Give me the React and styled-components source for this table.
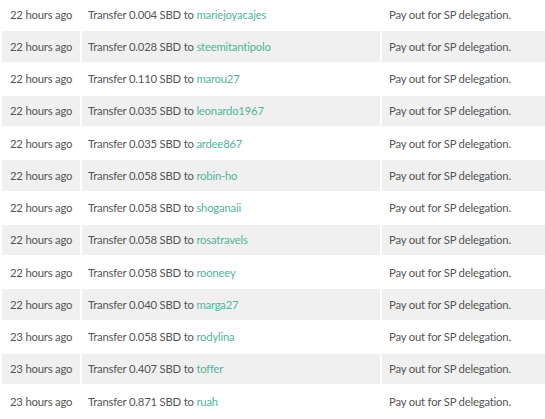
import styled, { createGlobalStyle } from 'styled-components'

const GlobalStyle = createGlobalStyle`
  body {
    margin: 0;
    background: #ffffff;
    overflow: hidden;
    font-family: Lato, "Noto Sans", sans-serif;
  }
`

const Table = styled.table`
  width: 620px;
  margin-top: -3px;
  border-collapse: separate;
  border-spacing: 2px;
  table-layout: fixed;

  font-size: 11.3px;
  letter-spacing: -0.2px;
  color: #555555;
`

const Row = styled.tr`
  background: ${(p) => (p.$striped ? '#f0f0f0' : '#ffffff')};
`

const Cell = styled.td`
  height: 30.25px;
  padding: 0 0 0 ${(p) => p.$pad || 8}px;
  white-space: nowrap;
  vertical-align: middle;
`

const Link = styled.a`
  color: #52b59c;
  text-decoration: none;
`

const rows = [
  ['22 hours ago', '0.004', 'mariejoyacajes'],
  ['22 hours ago', '0.028', 'steemitantipolo'],
  ['22 hours ago', '0.110', 'marou27'],
  ['22 hours ago', '0.035', 'leonardo1967'],
  ['22 hours ago', '0.035', 'ardee867'],
  ['22 hours ago', '0.058', 'robin-ho'],
  ['22 hours ago', '0.058', 'shoganaii'],
  ['22 hours ago', '0.058', 'rosatravels'],
  ['22 hours ago', '0.058', 'rooneey'],
  ['22 hours ago', '0.040', 'marga27'],
  ['23 hours ago', '0.058', 'rodylina'],
  ['23 hours ago', '0.407', 'toffer'],
  ['23 hours ago', '0.871', 'ruah'],
]

export default function App() {
  return (
    <>
      <GlobalStyle />
      <Table>
        <colgroup>
          <col style={{ width: 78 }} />
          <col style={{ width: 298 }} />
          <col />
        </colgroup>
        <tbody>
          {rows.map(([when, amount, to], i) => (
            <Row key={i} $striped={i % 2 === 1}>
              <Cell>{when}</Cell>
              <Cell $pad={6}>
                Transfer {amount} SBD to <Link href="#">{to}</Link>
              </Cell>
              <Cell $pad={7}>Pay out for SP delegation.</Cell>
            </Row>
          ))}
        </tbody>
      </Table>
    </>
  )
}
